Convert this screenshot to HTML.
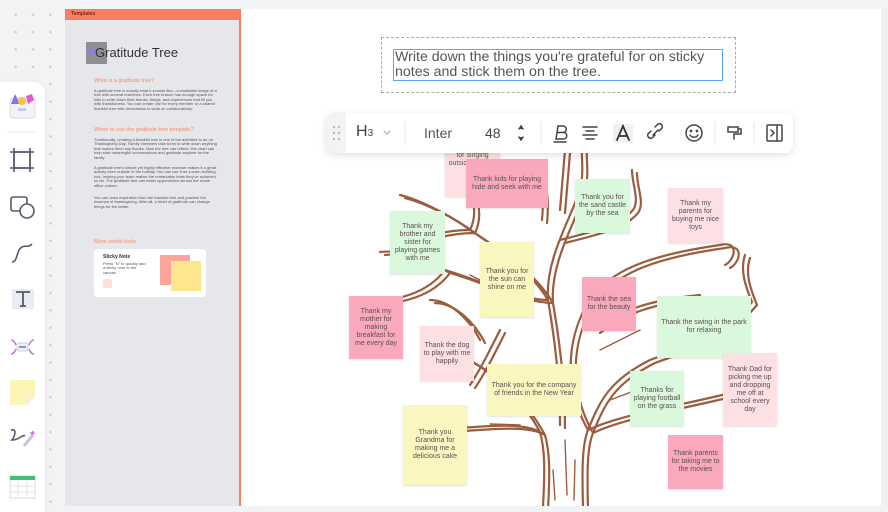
<!DOCTYPE html>
<html><head><meta charset="utf-8"><style>
*{margin:0;padding:0;box-sizing:border-box}
body{width:888px;height:506px;overflow:hidden;background:#f3f3f5;font-family:"Liberation Sans",sans-serif;position:relative;
background-image:radial-gradient(circle,#c9c9cf 1px,transparent 1.3px);background-size:17.4px 17.4px;background-position:7px 6px}
.abs{position:absolute}
#canvas{left:240px;top:9px;width:641px;height:497px;background:#fff}
#rstrip{left:881px;top:9px;width:7px;height:497px;background:#f0f0f2}
#tpl{left:65px;top:9px;width:176px;height:497px;background:#e6e7eb;border-right:2px solid #fa7d63}
#tplh{left:65px;top:9px;width:176px;height:11px;background:#fa7d63;font-size:5px;color:#7a2a18;padding:2px 6px;font-weight:bold}
.h{color:#f48a6e;font-size:5.5px}
.p{color:#555;font-size:4px;line-height:4.4px;width:126px}
#tb{left:0;top:82px;width:45px;height:430px;background:#fff;border-radius:0 10px 0 0;box-shadow:1px 0 3px rgba(0,0,0,.06)}
.note{position:absolute;display:flex;align-items:center;justify-content:center;text-align:center;font-size:7px;line-height:8px;color:#5a5050;padding:3px;box-shadow:0 1px 2px rgba(0,0,0,.12)}
.pk{background:#f9a9bb}.lp{background:#fde0e3}.gr{background:#d9f8dc}.ye{background:#faf6bf}
#bar{left:326px;top:113px;width:467px;height:40px;background:#fff;border-radius:8px;box-shadow:0 2px 8px rgba(0,0,0,.13);overflow:hidden}
</style></head><body>
<div id="canvas" class="abs"></div>
<div id="rstrip" class="abs"></div>

<!-- tree -->
<svg class="abs" style="left:240px;top:9px" width="641" height="497" viewBox="240 9 641 497" fill="none" stroke="#9c5c3e" stroke-width="2.2" stroke-linecap="round">
<g id="t">
<path d="M543 506 C545 470 545 450 540 432 C520 420 470 428 410 432 M583 506 C582 470 582 445 588 430 C620 415 660 410 735 392 M540 432 C520 395 490 370 460 355 M588 430 C600 400 610 380 650 360 C690 345 720 340 752 302 M752 302 C745 285 740 270 745 255 M560 425 C560 380 555 340 548 300 C545 260 570 220 580 190 C585 170 580 150 582 130"/>
<path d="M548 300 C530 270 500 250 470 230 C450 215 420 200 400 195 M470 230 C440 230 415 240 400 245 M470 230 C480 210 470 185 462 170 M548 300 C520 300 480 280 445 270 M445 270 C430 290 400 305 350 300 M445 270 C420 255 395 250 380 252 M560 240 C600 230 620 225 633 210 C640 200 632 185 632 170"/>
<path d="M588 430 C560 380 570 330 590 300 C610 270 650 255 720 245 C740 240 735 260 725 265 M595 330 C620 310 650 300 700 295"/>
<path d="M480 340 C470 320 450 300 430 300 M500 330 C490 350 480 370 470 385 M530 160 C540 175 545 190 542 220 M565 150 L560 210"/>
</g>
<use href="#t" transform="translate(5 3)"/>
<path stroke-width="1.4" d="M553 470 L555 500 M565 440 L567 495 M575 460 L574 500 M520 425 L490 424 M610 400 L650 385 M600 350 L640 330 M500 290 L470 275"/>
</svg>

<div id="tpl" class="abs"></div>
<div id="tplh" class="abs">Templates</div>
<div class="abs" style="left:86px;top:42px;width:21px;height:22px;background:#8f8f93"></div>
<div class="abs" style="left:88px;top:50px;width:8px;height:3px;background:#8b7cf0;border-radius:2px"></div>
<div class="abs" style="left:95px;top:45px;font-size:13px;color:#333">Gratitude Tree</div>
<div class="abs h" style="left:94px;top:78px">What is a gratitude tree?</div>
<div class="abs p" style="left:94px;top:89px">A gratitude tree is exactly what it sounds like—a worktable image of a tree with several branches. Each tree branch has enough space for kids to write down their thanks, things, and experiences that fill you with thankfulness. You can create one for every member or a shared thankful tree with decorations to work on collaboratively.</div>
<div class="abs h" style="left:94px;top:127px">When to use the gratitude tree template?</div>
<div class="abs p" style="left:94px;top:138px">Traditionally, creating a thankful tree is one of the activities to do on Thanksgiving Day. Family members take turns to write down anything that makes them say thanks. Now the tree can reflect, this chart can help start meaningful conversations and gratitude anytime for the family.</div>
<div class="abs p" style="left:94px;top:166px">A gratitude tree's simple yet highly effective exercise makes it a great activity even outside of the holiday. You can use it as a team-building tool, helping your team realise the remarkable feats they've achieved so far. The gratitude tree can foster appreciation across the whole office culture.</div>
<div class="abs p" style="left:94px;top:196px">You can draw inspiration from the thankful tree and practise the essence of thanksgiving. After all, a heart of gratitude can change things for the better.</div>
<div class="abs h" style="left:94px;top:239px">More useful tools</div>
<div class="abs" style="left:94px;top:249px;width:112px;height:48px;background:#fff;border-radius:3px"></div>
<div class="abs" style="left:103px;top:254px;font-size:5px;color:#333;font-weight:bold">Sticky Note</div>
<div class="abs p" style="left:103px;top:262px;width:45px">Press "N" to quickly add a sticky note to the canvas.</div>
<div class="abs" style="left:103px;top:279px;width:9px;height:9px;background:#fde0dc;border-radius:2px"></div>
<div class="abs" style="left:160px;top:255px;width:30px;height:30px;background:#fba59a"></div>
<div class="abs" style="left:171px;top:261px;width:30px;height:30px;background:#fde68e"></div>

<!-- left toolbar -->
<div id="tb" class="abs"></div>
<svg class="abs" style="left:0;top:82px" width="45" height="424" viewBox="0 82 45 424">
<rect x="10" y="98" width="25" height="20" rx="3" fill="#f3f1fb" stroke="#ddd"/>
<path d="M11 104 L15 94 L20 104Z" fill="#8b6ff0"/><circle cx="22" cy="101" r="4" fill="#f8c23a"/><path d="M26 96 L32 94 L34 100 L28 104Z" fill="#e05ad7"/>
<rect x="18" y="108" width="8" height="3" fill="#c9c6ea"/>
<line x1="7" y1="132" x2="38" y2="132" stroke="#eee"/>
<g stroke="#555a6e" stroke-width="1.6" fill="none">
<rect x="14" y="152" width="16" height="16"/><path d="M14 148v24M30 148v24M10 152h24M10 168h24"/>
<rect x="11" y="197" width="16" height="14" rx="2"/><circle cx="27" cy="211" r="7" fill="#fff"/>
<path d="M12 262 C18 262 16 250 22 247 C26 245 28 248 32 244"/>
<path d="M11 340 C14 340 15 343 16 345M34 340 C31 340 30 343 29 345M11 354 C14 354 15 351 16 349M34 354 C31 354 30 351 29 349" stroke="#c57de6"/>
<path d="M11 430 C18 428 14 438 12 440 C20 440 22 434 25 436"/>
</g>
<rect x="12" y="289" width="22" height="20" fill="#eaecf3"/>
<path d="M16 292h14M23 292v14M20 306h6" stroke="#555a6e" stroke-width="1.8" fill="none"/>
<rect x="17" y="343" width="11" height="8" rx="2" fill="#eceff5" stroke="#ccd" /><rect x="19" y="346" width="7" height="2" fill="#8f96ac"/>
<path d="M10 380 h25 v17 l-8 8 h-17Z" fill="#fdf5b8"/><path d="M35 397 l-8 8 v-8Z" fill="#eee"/>
<path d="M24 446 L33 435" stroke="#c5c8dc" stroke-width="3"/><path d="M31 434 l3 -2" stroke="#d16be6" stroke-width="3"/>
<rect x="10" y="476" width="25" height="22" fill="#fff" stroke="#ddd"/><rect x="10" y="476" width="25" height="4" fill="#3fc07a"/>
<path d="M10 486h25M10 492h25M18 480v18M27 480v18" stroke="#ddd" stroke-width=".8"/>
</svg>

<!-- title -->
<div class="abs" style="left:381px;top:37px;width:355px;height:56px;border:1px dashed #aaa"></div>
<div class="abs" style="left:393px;top:49px;width:330px;height:32px;border:1px solid #5aa8f5;font-size:14.2px;line-height:15px;color:#555;padding:0 0 0 1px;white-space:nowrap">Write down the things you're grateful for on sticky<br>notes and stick them on the tree.</div>

<!-- notes -->
<div class="note lp" style="left:445px;top:152px;width:55px;height:45px;align-items:flex-start;padding-top:0">for singing outside window</div>
<div class="note pk" style="left:466px;top:159px;width:82px;height:49px">Thank kids for playing hide and seek with me</div>
<div class="note gr" style="left:575px;top:179px;width:55px;height:54px">Thank you for the sand castle by the sea</div>
<div class="note lp" style="left:668px;top:188px;width:55px;height:55px">Thank my parents for buying me nice toys</div>
<div class="note gr" style="left:390px;top:211px;width:55px;height:63px">Thank my brother and sister for playing games with me</div>
<div class="note ye" style="left:480px;top:242px;width:54px;height:75px">Thank you for the sun can shine on me</div>
<div class="note pk" style="left:582px;top:277px;width:54px;height:54px">Thank the sea for the beauty</div>
<div class="note gr" style="left:657px;top:296px;width:94px;height:62px">Thank the swing in the park for relaxing</div>
<div class="note pk" style="left:349px;top:296px;width:54px;height:63px">Thank my mother for making breakfast for me every day</div>
<div class="note lp" style="left:420px;top:326px;width:54px;height:55px">Thank the dog to play with me happily</div>
<div class="note ye" style="left:487px;top:364px;width:94px;height:52px">Thank you for the company of friends in the New Year</div>
<div class="note gr" style="left:630px;top:371px;width:54px;height:55px">Thanks for playing football on the grass</div>
<div class="note lp" style="left:723px;top:353px;width:54px;height:73px">Thank Dad for picking me up and dropping me off at school every day</div>
<div class="note ye" style="left:403px;top:405px;width:64px;height:80px">Thank you Grandma for making me a delicious cake</div>
<div class="note pk" style="left:668px;top:435px;width:55px;height:54px">Thank parents for taking me to the movies</div>

<!-- floating toolbar -->
<div id="bar" class="abs">
<div class="abs" style="left:0;top:0;width:20px;height:40px;background:#f3f3f5"></div>
<svg class="abs" style="left:0;top:0" width="467" height="40" fill="none" stroke="#444" stroke-width="1.5" stroke-linecap="round">
<g fill="#bbb" stroke="none"><circle cx="8" cy="14" r="1.2"/><circle cx="13" cy="14" r="1.2"/><circle cx="8" cy="20" r="1.2"/><circle cx="13" cy="20" r="1.2"/><circle cx="8" cy="26" r="1.2"/><circle cx="13" cy="26" r="1.2"/></g>
<path d="M58 18l3 3 3-3" stroke="#aaa" stroke-width="1"/>
<line x1="79" y1="9" x2="79" y2="31" stroke="#eee"/>
<path d="M193 16l2-3 2 3M193 24l2 3 2-3" stroke="#444" fill="#444"/>
<line x1="215" y1="9" x2="215" y2="31" stroke="#eee"/>
<path d="M232 13h5a3.2 3.2 0 0 1 0 6.5h-6M231 19.5h7a3.3 3.3 0 0 1 0 6.5h-8l2-13M228 29h12"/>
<path d="M257 14h14M260 18h8M257 22h14M260 26h8"/>
<rect x="287" y="11" width="20" height="19" rx="2" fill="#f0f0f0" stroke="none"/>
<path d="M291 27l6-14 6 14M293 23h8" stroke="#333" stroke-width="1.8"/>
<path d="M329 22l-3 3a3 3 0 0 1-4-4l3-3M333 18l3-3a3 3 0 0 0-4-4l-3 3M327 22l5-5"/>
<circle cx="368" cy="20" r="8"/><circle cx="365" cy="18" r=".6" fill="#444"/><circle cx="371" cy="18" r=".6" fill="#444"/><path d="M364 22c2 3 6 3 8 0"/>
<line x1="389" y1="9" x2="389" y2="31" stroke="#eee"/>
<path d="M402 14h10v5h-10zM412 16h3v5h-7v5"/>
<line x1="428" y1="9" x2="428" y2="31" stroke="#eee"/>
<rect x="441" y="12" width="15" height="16" rx="1"/><path d="M451 12v16M445 17l3 3-3 3"/>
</svg>
<div class="abs" style="left:30px;top:10px;font-size:16px;color:#444">H<span style="font-size:10px">3</span></div>
<div class="abs" style="left:98px;top:12px;font-size:14px;color:#555">Inter</div>
<div class="abs" style="left:159px;top:12px;font-size:14px;color:#444">48</div>
</div>
</body></html>
